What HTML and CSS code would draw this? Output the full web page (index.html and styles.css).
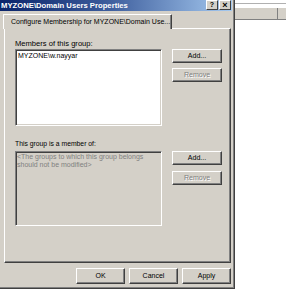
FILE: index.html
```html
<!DOCTYPE html>
<html>
<head>
<meta charset="utf-8">
<link rel="stylesheet" href="styles.css">
</head>
<body>
<div class="page">
  <div class="dialog">
    <div class="titlebar">
      <span class="title">MYZONE\Domain Users Properties</span>
      <div class="caption-btns">
        <span class="cbtn">?</span>
        <span class="cbtn x">×</span>
      </div>
    </div>
    <div class="client">
      <div class="tabs">
        <div class="tab">Configure Membership for MYZONE\Domain Use...</div>
      </div>
      <div class="panel">
        <div class="label first">Members of this group:</div>
        <div class="row">
          <div class="list list-a">MYZONE\w.nayyar</div>
          <div class="btncol">
            <div class="btn">Add...</div>
            <div class="btn disabled">Remove</div>
          </div>
        </div>
        <div class="label second">This group is a member of:</div>
        <div class="row">
          <div class="list list-b">&lt;The groups to which this group belongs<br>should not be modified&gt;</div>
          <div class="btncol">
            <div class="btn">Add...</div>
            <div class="btn disabled gap2">Remove</div>
          </div>
        </div>
      </div>
      <div class="footer">
        <div class="btn wide">OK</div>
        <div class="btn wide">Cancel</div>
        <div class="btn wide">Apply</div>
      </div>
    </div>
  </div>
  <div class="side">
    <div class="side-line"></div>
    <div class="side-header">
      <div class="hcell"></div>
      <div class="hcell last"></div>
    </div>
  </div>
</div>
</body>
</html>
```
FILE: styles.css
```css
html, body {
  margin: 0;
  padding: 0;
  background: #ffffff;
}
body {
  font-family: "Liberation Sans", Arial, sans-serif;
  width: 286px;
  height: 300px;
  overflow: hidden;
}
.page {
  display: flex;
  align-items: flex-start;
}
.dialog {
  width: 234px;
  height: 288px;
  background: #d4d0c8;
  border-right: 1px solid #404040;
  border-bottom: 1px solid #404040;
  box-shadow: inset -1px -1px 0 #808080;
  display: flex;
  flex-direction: column;
  flex-shrink: 0;
}
.titlebar {
  height: 11px;
  margin-right: 2px;
  background: linear-gradient(to right, #0a246a 0%, #3a5a9a 45%, #a6caf0 100%);
  display: flex;
  align-items: center;
  justify-content: space-between;
}
.title {
  color: #ffffff;
  font-weight: bold;
  font-size: 7.7px;
  padding-left: 1px;
  line-height: 11px;
  margin-top: -1px;
}
.caption-btns {
  display: flex;
  gap: 1px;
  padding-right: 1px;
  margin-top: -1px;
}
.cbtn {
  width: 10px;
  height: 8px;
  background: #d4d0c8;
  border-top: 1px solid #ffffff;
  border-left: 1px solid #ffffff;
  border-right: 1px solid #404040;
  border-bottom: 1px solid #404040;
  font-size: 7px;
  font-weight: bold;
  line-height: 8px;
  text-align: center;
  color: #000;
  box-sizing: content-box;
}
.cbtn.x {
  font-size: 9px;
}
.client {
  padding: 3px 0 0 3px;
  display: flex;
  flex-direction: column;
}
.tabs {
  display: flex;
  height: 14px;
}
.tab {
  width: 169px;
  box-sizing: border-box;
  border-top: 1px solid #ffffff;
  border-left: 1px solid #ffffff;
  border-right: 1px solid #404040;
  box-shadow: inset -1px 0 0 #808080;
  border-radius: 1px 1px 0 0;
  font-size: 7px;
  line-height: 13px;
  padding-left: 7px;
  color: #000;
  white-space: nowrap;
  position: relative;
  z-index: 1;
  background: #d4d0c8;
  margin-bottom: -1px;
  height: 15px;
}
.panel {
  width: 227px;
  height: 235px;
  box-sizing: border-box;
  margin-left: 1px;
  border-top: 1px solid #ffffff;
  border-left: 1px solid #ffffff;
  border-right: 1px solid #404040;
  border-bottom: 1px solid #404040;
  box-shadow: inset -1px -1px 0 #808080;
  padding: 0 0 0 10px;
}
.label {
  color: #000;
  line-height: 8px;
}
.label.first {
  font-size: 7.6px;
  margin-top: 11px;
  margin-bottom: 1px;
}
.label.second {
  font-size: 6.8px;
  margin-top: 14px;
  margin-bottom: 3px;
}
.row {
  display: flex;
  gap: 10px;
  align-items: flex-start;
}
.list {
  width: 147px;
  box-sizing: border-box;
  border-top: 1px solid #808080;
  border-left: 1px solid #808080;
  border-right: 1px solid #ffffff;
  border-bottom: 1px solid #ffffff;
  box-shadow: inset 1px 1px 0 #404040, inset -1px -1px 0 #d4d0c8;
  font-size: 7px;
  line-height: 8px;
  padding: 2px 2px;
}
.list-a {
  height: 77px;
  background: #ffffff;
  color: #000;
}
.list-b {
  height: 75px;
  background: #d4d0c8;
  color: #808080;
  padding-top: 1px;
  padding-left: 1px;
}
.btncol {
  display: flex;
  flex-direction: column;
  gap: 5px;
}
.btn {
  width: 50px;
  height: 14px;
  box-sizing: border-box;
  background: #d4d0c8;
  border-top: 1px solid #ffffff;
  border-left: 1px solid #ffffff;
  border-right: 1px solid #404040;
  border-bottom: 1px solid #404040;
  box-shadow: inset -1px -1px 0 #808080;
  font-size: 7px;
  line-height: 12px;
  text-align: center;
  color: #000;
}
.btn.disabled {
  color: #808080;
  text-shadow: 1px 1px 0 #ffffff;
}
.btn.gap2 {
  margin-top: 1px;
}
.footer {
  display: flex;
  justify-content: flex-end;
  gap: 4px;
  margin-top: 5px;
  padding-right: 3px;
}
.btn.wide {
  width: 49px;
  height: 16px;
  line-height: 14px;
}
.side {
  flex: 1;
  display: flex;
  flex-direction: column;
  padding-top: 3px;
}
.side-line {
  height: 1px;
  background: #b0b0b0;
  margin-bottom: 3px;
}
.side-header {
  display: flex;
  height: 11px;
  background: #d4d0c8;
  border-top: 1px solid #ffffff;
  border-bottom: 1px solid #808080;
}
.hcell {
  flex: 1;
  border-right: 1px solid #808080;
}
.hcell.last {
  flex: 0 0 8px;
  border-right: none;
}
```
